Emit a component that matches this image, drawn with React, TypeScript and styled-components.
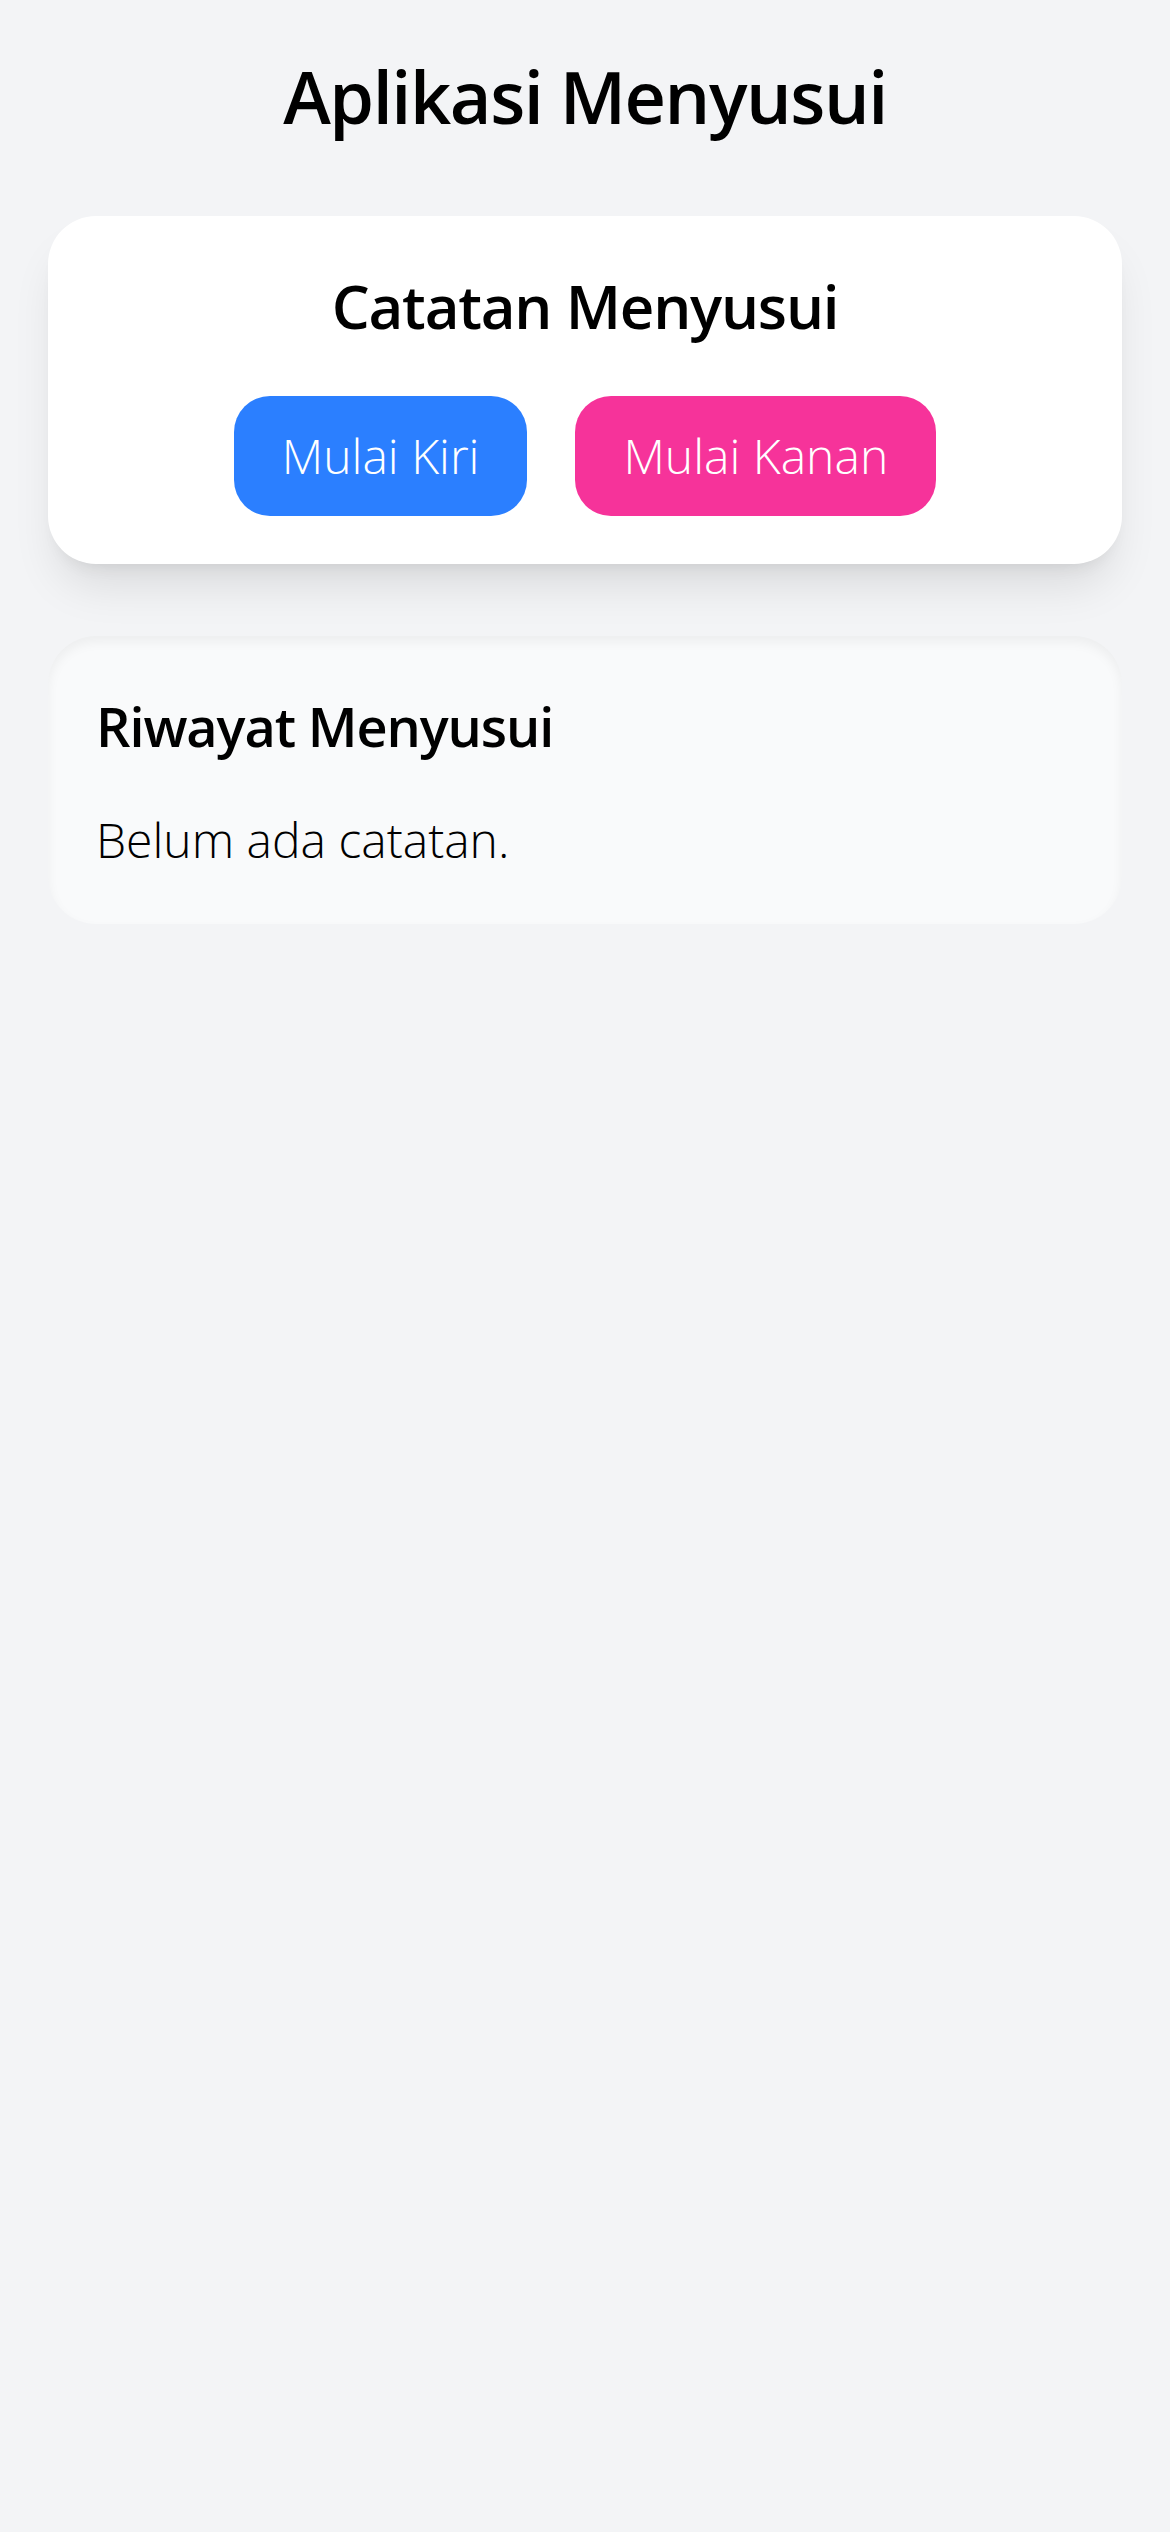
import * as React from 'react';
import styled, { createGlobalStyle } from 'styled-components';

const GlobalStyle = createGlobalStyle`
  html, body {
    margin: 0;
    padding: 0;
    background: #f3f4f6;
  }
  body {
    font-family: 'Open Sans', 'Noto Sans', sans-serif;
    color: #000;
    min-height: 2532px;
  }
`;

export default () => {
  const logs: string[] = [];
  return (
    <>
      <GlobalStyle />
      <Page>
        <Title>Aplikasi Menyusui</Title>

        <TimerCard>
          <CardTitle>Catatan Menyusui</CardTitle>
          <ButtonRow>
            <SideButton color="#2b7fff">Mulai Kiri</SideButton>
            <SideButton color="#f6339a">Mulai Kanan</SideButton>
          </ButtonRow>
        </TimerCard>

        <HistoryCard>
          <HistoryTitle>Riwayat Menyusui</HistoryTitle>
          {logs.length === 0 ? <Empty>Belum ada catatan.</Empty> : null}
        </HistoryCard>
      </Page>
    </>
  );
};

const Page = styled.div`
  padding: 48px;
  display: flex;
  flex-direction: column;
`;

const Title = styled.h1`
  margin: 0 0 72px;
  font-size: 72px;
  line-height: 96px;
  font-weight: 600;
  letter-spacing: -0.02em;
  text-align: center;
`;

const TimerCard = styled.div`
  background: #fff;
  border-radius: 48px;
  padding: 48px;
  box-shadow: 0 30px 45px -9px rgba(0, 0, 0, 0.1), 0 12px 18px -12px rgba(0, 0, 0, 0.1);
  display: flex;
  flex-direction: column;
  align-items: center;
`;

const CardTitle = styled.h2`
  margin: 0 0 48px;
  font-size: 60px;
  line-height: 84px;
  font-weight: 600;
  letter-spacing: -0.02em;
`;

const ButtonRow = styled.div`
  display: flex;
  gap: 48px;
  justify-content: center;
`;

const SideButton = styled.button<{ color: string }>`
  background: ${(props) => props.color};
  color: #fff;
  border: none;
  border-radius: 36px;
  padding: 24px 48px;
  font-family: inherit;
  font-size: 48px;
  line-height: 72px;
  font-weight: 300;
  cursor: pointer;
`;

const HistoryCard = styled.div`
  margin-top: 72px;
  background: #f9fafb;
  border-radius: 48px;
  padding: 48px;
  box-shadow: inset 0 6px 12px rgba(0, 0, 0, 0.05);
`;

const HistoryTitle = styled.h3`
  margin: 0 0 36px;
  font-size: 54px;
  line-height: 84px;
  font-weight: 600;
  letter-spacing: -0.02em;
`;

const Empty = styled.p`
  margin: 0;
  font-size: 48px;
  line-height: 72px;
  font-weight: 300;
`;
